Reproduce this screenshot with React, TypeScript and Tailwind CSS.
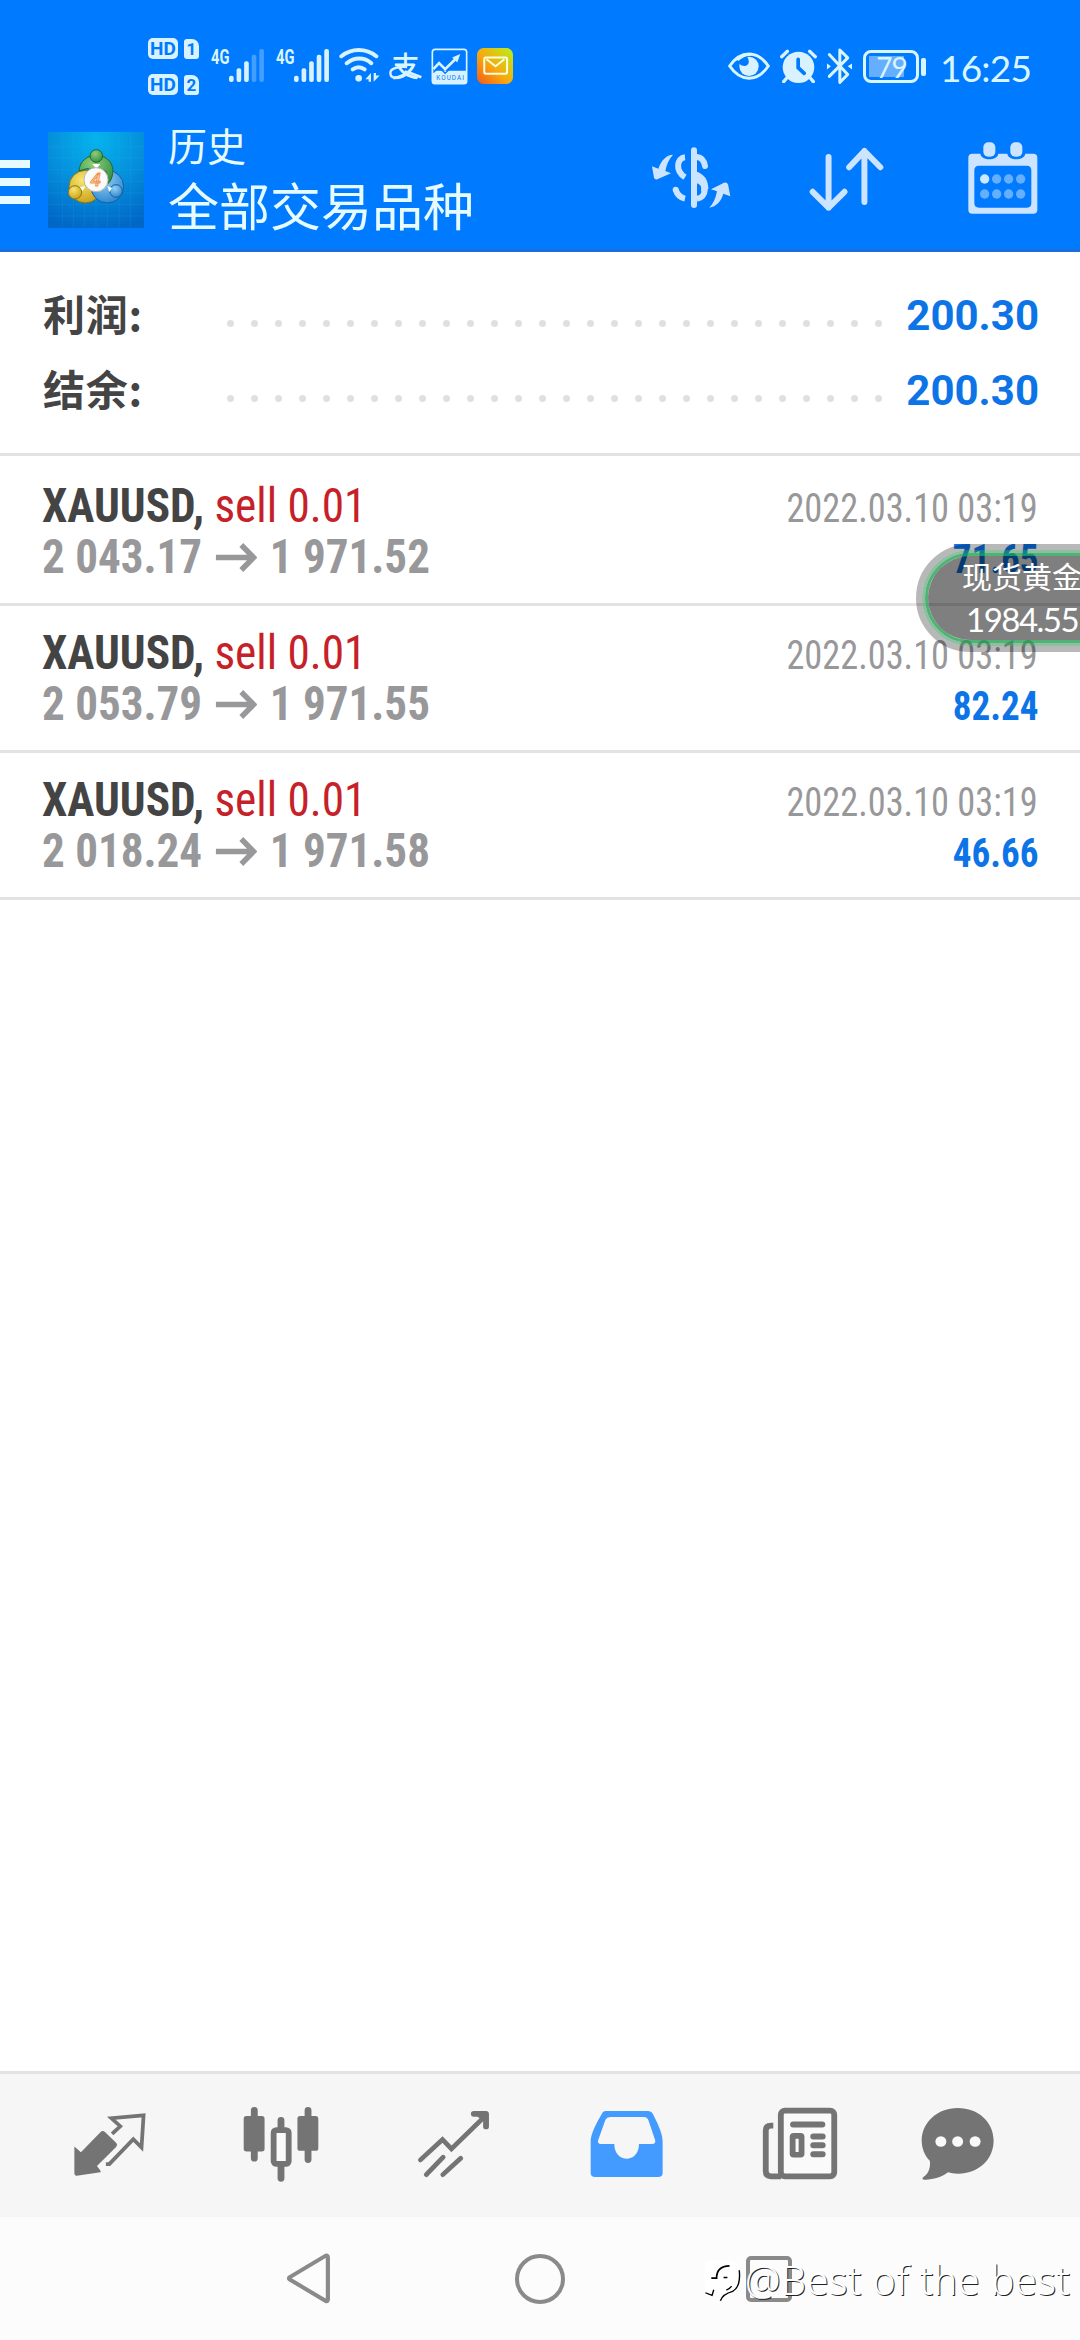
import { type ReactNode } from "react";

interface Deal {
  symbol: string;
  side: string;
  open: string;
  close: string;
  time: string;
  profit: string;
}

interface IconProps {
  box: string;
  className: string;
  children: ReactNode;
}

const summary = [
  { label: "利润:", value: "200.30" },
  { label: "结余:", value: "200.30" }
];

const deals: Deal[] = [
  { symbol: "XAUUSD,", side: "sell 0.01", open: "2 043.17", close: "1 971.52", time: "2022.03.10 03:19", profit: "71.65" },
  { symbol: "XAUUSD,", side: "sell 0.01", open: "2 053.79", close: "1 971.55", time: "2022.03.10 03:19", profit: "82.24" },
  { symbol: "XAUUSD,", side: "sell 0.01", open: "2 018.24", close: "1 971.58", time: "2022.03.10 03:19", profit: "46.66" }
];

const dots = Array.from({ length: 28 }, (_, i) => i);

function Icon({ box, className, children }: IconProps) {
  return (
    <svg viewBox={box} preserveAspectRatio="none" className={`shrink-0 ${className}`} fill="none">
      {children}
    </svg>
  );
}

function SimBadge({ n }: { n: string }) {
  return (
    <div className="flex items-center gap-[6px] text-[#007aff] font-['Roboto'] font-bold">
      <span className="w-[30px] h-[21px] rounded-[5px] bg-[#d9f2ff] text-[19px] leading-[21px] text-center">HD</span>
      <span className="w-[15px] h-[20px] rounded-[3px] rounded-tr-[7px] bg-[#d9f2ff] text-[17px] leading-[21px] text-center">{n}</span>
    </div>
  );
}

function Signal({ level }: { level: number }) {
  const tops = [167, 145, 124, 104, 87];
  return (
    <Icon box="297 87 105 99" className="w-[35px] h-[33px]">
      {tops.map((top, i) => (
        <rect key={top} x={297 + i * 22.7} y={top} width="14" height={186 - top} rx="6" fill="#d9f2ff" opacity={i < level ? 1 : 0.3} />
      ))}
    </Icon>
  );
}

function StatusBar() {
  return (
    <div className="h-[110px] flex items-start text-[#d9f6ff]">
      <div className="ml-[148px] mt-[38px] flex flex-col gap-[15px]">
        <SimBadge n="1" />
        <SimBadge n="2" />
      </div>
      <span className="w-[18px] ml-[12px] mt-[45px] font-['Roboto'] font-bold text-[21px] leading-[24px] whitespace-nowrap origin-left scale-x-[0.7]">4G</span>
      <div className="mt-[49px]"><Signal level={3} /></div>
      <span className="w-[18px] ml-[12px] mt-[45px] font-['Roboto'] font-bold text-[21px] leading-[24px] whitespace-nowrap origin-left scale-x-[0.7]">4G</span>
      <div className="mt-[49px]"><Signal level={5} /></div>
      <Icon box="627 85 123 103" className="w-[41px] h-[34px] ml-[10px] mt-[48px]">
        <g stroke="#d9f2ff" strokeWidth="12" strokeLinecap="round">
          <path d="M634 110C665 85 708 85 739 110" />
          <path d="M650 131C673 112 703 112 724 131" />
          <path d="M668 150C679 142 693 142 704 150" />
        </g>
        <circle cx="686" cy="177" r="10" fill="#d9f2ff" />
        <path d="M706 180L723 161V187H716V180ZM731 161V187L749 168H738V161Z" fill="#d9f2ff" />
      </Icon>
      <div className="relative w-[33px] h-[34px] ml-[9px] mt-[48px]">
        <span className="block text-[28px] leading-[34px] font-medium font-['Noto_Sans_CJK_SC'] text-center">支</span>
        <Icon box="778 140 98 40" className="absolute left-0 top-[18px] w-[33px] h-[14px]">
          <path d="M832 143C810 140 782 146 782 160C782 177 812 181 836 158" stroke="#d9f2ff" strokeWidth="7" />
          <path d="M825 156C845 160 860 166 874 172" stroke="#d9f2ff" strokeWidth="8" />
        </Icon>
      </div>
      <Icon box="903 85 110 110" className="w-[37px] h-[37px] ml-[9px] mt-[48px]">
        <rect x="907" y="89" width="102" height="102" rx="8" stroke="#d9f2ff" strokeWidth="5" />
        <path d="M907 153H1009V185Q1009 191 1003 191H913Q907 191 907 185Z" fill="#d9f2ff" />
        <path d="M910 148L927 130L945 148L982 112" stroke="#d9f2ff" strokeWidth="8" />
        <path d="M910 158L927 142L945 160L960 146" stroke="#007aff" strokeWidth="4" />
        <path d="M966 113L990 103L981 128Z" fill="#d9f2ff" />
        <text x="919" y="180" textLength="82" fill="#007aff" fontSize="19" fontFamily="Roboto">KOUDAI</text>
      </Icon>
      <Icon box="1037 84 109 109" className="w-[36px] h-[36px] ml-[9px] mt-[48px]">
        <defs>
          <linearGradient id="mail" x1="0" y1="1" x2="1" y2="0">
            <stop offset="0" stopColor="#f2591a" />
            <stop offset="0.45" stopColor="#f9a80f" />
            <stop offset="1" stopColor="#b7f01c" />
          </linearGradient>
        </defs>
        <rect x="1037" y="84" width="109" height="109" rx="20" fill="url(#mail)" />
        <rect x="1059" y="113" width="69" height="49" rx="5" stroke="#f6ffe0" strokeWidth="6" />
        <path d="M1066 118L1093 139L1120 118" stroke="#f6ffe0" strokeWidth="6" />
      </Icon>

      <Icon box="80 97 126 84" className="w-[42px] h-[28px] ml-auto mt-[52px]">
        <path d="M85 139C118 91 168 91 201 139C168 188 118 188 85 139Z" stroke="#d9f6ff" strokeWidth="9" />
        <circle cx="143" cy="140" r="29" fill="#d9f2ff" />
        <path d="M110 118L136 108C146 124 144 136 131 139Q122 140 114 132Z" fill="#007aff" />
        <path d="M108 121C120 110 134 104 150 104" stroke="#d9f6ff" strokeWidth="9" />
      </Icon>
      <Icon box="238 88 110 102" className="w-[37px] h-[34px] ml-[10px] mt-[49px]">
        <circle cx="293" cy="143" r="47" fill="#d9f2ff" />
        <path d="M243 111L260 95M343 111L326 95M258 175L249 186M328 175L337 186" stroke="#d9f2ff" strokeWidth="10" strokeLinecap="round" />
        <path d="M292 119V144L310 161" stroke="#007aff" strokeWidth="11" strokeLinecap="round" />
      </Icon>
      <Icon box="376 84 82 112" className="w-[27px] h-[37px] ml-[9px] mt-[48px]">
        <path d="M386 104L442 164L418 188V90L442 114L386 170" stroke="#d9f6ff" strokeWidth="9" strokeLinecap="round" strokeLinejoin="round" />
        <path d="M379 131L391 139L379 149ZM455 131L442 139L455 149Z" fill="#d9f6ff" />
      </Icon>
      <div className="relative w-[56px] h-[33px] ml-[10px] mt-[50px] rounded-[8px] border-[3px] border-[#d9f6ff]">
        <div className="absolute left-[3px] top-[3px] w-[35px] h-[21px] bg-[#66aeff]" />
        <span className="relative block pl-[1px] text-center text-[28px] leading-[28px] font-['Lato'] tracking-[-1px]">79</span>
      </div>
      <div className="w-[5px] h-[18px] ml-[2px] mt-[58px] rounded-[2px] bg-[#d9f6ff]" />
      <span className="w-[90px] ml-[14px] mr-[50px] mt-[46px] text-[37px] leading-[44px] font-['Lato'] tracking-[-0.8px] whitespace-nowrap">16:25</span>
    </div>
  );
}

function AppLogo() {
  return (
    <Icon box="144 66 288 288" className="w-[96px] h-[96px]">
      <defs>
        <radialGradient id="sky" cx="0.5" cy="0.08" r="0.95">
          <stop offset="0" stopColor="#04b4ee" />
          <stop offset="0.5" stopColor="#0590dc" />
          <stop offset="1" stopColor="#0067c6" />
        </radialGradient>
        <radialGradient id="green" cx="0.4" cy="0.3" r="0.8">
          <stop offset="0" stopColor="#8fce7c" />
          <stop offset="1" stopColor="#2b8a3c" />
        </radialGradient>
        <radialGradient id="gold" cx="0.4" cy="0.3" r="0.8">
          <stop offset="0" stopColor="#f6e670" />
          <stop offset="1" stopColor="#c79a10" />
        </radialGradient>
        <radialGradient id="blue" cx="0.4" cy="0.3" r="0.8">
          <stop offset="0" stopColor="#94cff5" />
          <stop offset="1" stopColor="#2380cc" />
        </radialGradient>
      </defs>
      <rect x="144" y="66" width="288" height="288" fill="url(#sky)" />
      <path d="M187 66V354M220 66V354M253 66V354M288 66V354M322 66V354M357 66V354M391 66V354M144 110H432M144 144H432M144 179H432M144 214H432M144 249H432M144 283H432M144 318H432" stroke="#3fb4f0" strokeOpacity="0.22" strokeWidth="2" />
      <g strokeWidth="3">
        <circle cx="256" cy="230" r="49" fill="url(#gold)" stroke="#7d7420" />
        <circle cx="322" cy="230" r="49" fill="url(#blue)" stroke="#15609f" />
        <path d="M237 183C241 120 337 120 339 183C337 205 330 218 322 222L318 184L260 176Z" fill="url(#green)" stroke="#1d6a34" />
        <circle cx="289" cy="138" r="19" fill="url(#green)" stroke="#1d6a34" />
        <circle cx="225" cy="247" r="20" fill="url(#gold)" stroke="#8d7414" />
        <circle cx="348" cy="243" r="19" fill="url(#blue)" stroke="#15609f" />
      </g>
      <path d="M277 162H301L289 177ZM240 232L256 228L248 244ZM322 228L336 234L328 246Z" fill="#fff" />
      <circle cx="288" cy="209" r="36" fill="#fafafa" stroke="#bdb8b0" strokeWidth="3" />
      <text x="287" y="229" textAnchor="middle" fill="#fbe3c8" stroke="#f0964f" strokeWidth="3" fontSize="56" fontWeight="500" fontStyle="italic" fontFamily="Roboto">4</text>
    </Icon>
  );
}

function Header() {
  return (
    <header className="h-[252px] bg-[#007aff] border-b-[3px] border-[#1a6ddb]">
      <StatusBar />
      <div className="flex items-start text-[#e6fbff]">
        <div className="mt-[50px] w-[30px] flex flex-col gap-[10px]">
          <span className="h-[8px] bg-[#e6fbff]" />
          <span className="h-[8px] bg-[#e6fbff]" />
          <span className="h-[8px] bg-[#e6fbff]" />
        </div>
        <div className="ml-[18px] mt-[22px]"><AppLogo /></div>
        <div className="ml-[24px] mt-[7px] font-['Noto_Sans_CJK_SC']">
          <div className="text-[39px] leading-[54px]">历史</div>
          <div className="text-[51px] leading-[66px]">全部交易品种</div>
        </div>
        <Icon box="90 112 240 186" className="w-[80px] h-[62px] ml-auto mt-[37px]">
          <rect x="210" y="113" width="18" height="182" rx="9" fill="#cce4ff" />
          <g stroke="#cce4ff" strokeWidth="18">
            <path d="M192 143C168 145 161 183 192 203" />
            <path d="M228 142C241 143 249 152 252 169" strokeLinecap="round" />
            <path d="M228 211C260 219 258 264 228 267" />
            <path d="M164 240C169 257 178 264 192 267" strokeLinecap="butt" />
          </g>
          <circle cx="164" cy="240" r="9" fill="#cce4ff" />
          <path d="M228 186C248 194 262 207 262 238L240 246C243 225 238 216 228 214Z" fill="#cce4ff" />
          <path d="M156 135C136 136 121 151 112 177L93 170L99 204Q101 211 109 209L150 191L133 184C137 163 144 148 156 135Z" fill="#cce4ff" />
          <path d="M265 294C286 290 300 276 307 252L328 260L321 224Q318 217 309 219L270 239L288 245C284 266 277 281 265 294Z" fill="#cce4ff" />
        </Icon>
        <Icon box="565 110 226 196" className="w-[75px] h-[65px] ml-[78px] mt-[37px]">
          <g stroke="#cce4ff" strokeWidth="18" strokeLinecap="round" strokeLinejoin="round">
            <path d="M624 140V293M576 245L624 293L672 245" />
            <path d="M732 276V122M686 171L732 122L780 171" />
          </g>
        </Icon>
        <Icon box="1043 97 210 216" className="w-[70px] h-[72px] ml-[84px] mr-[42px] mt-[32px]">
          <path fillRule="evenodd" fill="#cce4ff" d="M1056 132H1080C1083 154 1131 154 1134 132H1161C1164 154 1212 154 1215 132H1239Q1251 132 1251 144V300Q1251 312 1239 312H1056Q1044 312 1044 300V144Q1044 132 1056 132ZM1076 168Q1062 168 1062 182V280Q1062 294 1076 294H1220Q1233 294 1233 280V182Q1233 168 1220 168Z" />
          <rect x="1089" y="98" width="36" height="43" rx="15" fill="#cce4ff" />
          <rect x="1170" y="98" width="36" height="43" rx="15" fill="#cce4ff" />
          {[208, 253].map((y) =>
            [1093, 1129, 1165, 1201].map((x) => (
              <circle key={`${x}-${y}`} cx={x} cy={y} r="14" fill={x === 1093 && y === 208 ? "#cce9ff" : "#66afff"} />
            ))
          )}
        </Icon>
      </div>
    </header>
  );
}

function Summary() {
  return (
    <section className="h-[204px] pt-[22px] border-b-[3px] border-[#e3e3e3]">
      {summary.map((row) => (
        <div key={row.label} className="h-[75px] pl-[42px] pr-[42px] flex items-baseline leading-[75px] text-[42px] font-bold">
          <span className="w-[185px] translate-x-[1px] translate-y-[1px] tracking-[0.8px] text-[#444] font-['Noto_Sans_CJK_SC']">{row.label}</span>
          <span className="flex gap-[17px] -translate-y-[3px]">
            {dots.map((i) => (
              <span key={i} className="size-[7px] rounded-full bg-[#e0e0e0]" />
            ))}
          </span>
          <span className="ml-auto translate-x-[1px] text-[#0d74e7] font-['Roboto']">{row.value}</span>
        </div>
      ))}
    </section>
  );
}

function DealRow({ deal }: { deal: Deal }) {
  return (
    <div className="h-[147px] pt-[21px] px-[42px] border-b-[3px] border-[#e3e3e3] font-['Roboto'] font-stretch-condensed text-[48px] leading-[51px]">
      <div className="h-[51px] flex items-baseline justify-between">
        <div className="origin-left scale-x-[0.943]">
          <span className="font-bold text-[#444]">{deal.symbol}</span>{" "}
          <span className="text-[#c62128]">{deal.side}</span>
        </div>
        <span className="origin-right scale-x-[0.908] text-[40px] text-[#98989a]">{deal.time}</span>
      </div>
      <div className="h-[51px] flex items-baseline justify-between font-bold">
        <div className="flex items-baseline origin-left scale-x-[0.939] text-[#98989a]">
          <span>{deal.open}</span>
          <Icon box="0 0 42 29" className="w-[44px] h-[29px] mx-[14px] translate-y-[-1px]">
            <path d="M0 14.500H38M26 2L38.500 14.500L26 27" stroke="#98989a" strokeWidth="5.500" />
          </Icon>
          <span>{deal.close}</span>
        </div>
        <span className="origin-right scale-x-[0.928] text-[40px] text-[#0d74e7]">{deal.profit}</span>
      </div>
    </div>
  );
}

// Floating quote widget docked to the right edge
function QuoteBubble() {
  return (
    <div className="absolute left-[916px] top-[544px] w-[240px] h-[108px] rounded-full border-[6px] border-black/28">
      <div className="h-full rounded-full border-[3px] border-[#1f8047]/50">
        <div className="h-full rounded-full border-[3px] border-[#159a45]/75">
          <div className="h-full rounded-full bg-black/50 text-white pl-[34px] whitespace-nowrap">
            <div className="pt-[1px] text-[30px] leading-[36px] font-['Noto_Sans_CJK_SC']">现货黄金</div>
            <div className="pl-[4px] pt-[6px] text-[33px] leading-[40px] font-['Lato'] tracking-[-1.500px]">1984.55</div>
          </div>
        </div>
      </div>
    </div>
  );
}

function TabBar() {
  return (
    <nav className="h-[146px] bg-[#f6f6f6] border-t-[3px] border-[#e3e3e3] flex items-start">
      <Icon box="212 155 216 196" className="w-[74px] h-[65px] ml-[73px] mt-[38px]">
        <path d="M216 259L235 276L292 216Q299 209 306 216L337 247Q344 254 337 261L282 318L293 333L292 337L223 347Q216 348 216 340Z" fill="#747474" />
        <path d="M326 221L350 198L324 174L418 165L412 262L388 237L318 312H308" stroke="#747474" strokeWidth="11" />
      </Icon>
      <Icon box="706 140 222 224" className="w-[76px] h-[75px] ml-[96px] mt-[33px]">
        <path d="M739 150V293M896 150V297M817 180V210M817 310V353" stroke="#747474" strokeWidth="20" strokeLinecap="round" />
        <rect x="708" y="167" width="61" height="106" rx="8" fill="#747474" />
        <rect x="865" y="167" width="61" height="104" rx="8" fill="#747474" />
        <rect x="795.500" y="209" width="44" height="101" rx="8" stroke="#747474" strokeWidth="17" fill="#fafafa" />
      </Icon>
      <Icon box="1211 147 212 203" className="w-[73px] h-[68px] ml-[98px] mt-[36px]">
        <g stroke="#747474" strokeWidth="14" strokeLinecap="round">
          <path d="M1221 296L1285 235L1311 263L1408 166" />
          <path d="M1238 340L1287 288M1286 340L1338 291" />
        </g>
        <path d="M1376 150H1411Q1420 150 1420 159V196A8.500 8.500 0 0 1 1403 196V180L1387 167H1376A8.500 8.500 0 0 1 1376 150Z" fill="#747474" />
      </Icon>
      <Icon box="144 147 216 204" className="w-[74px] h-[68px] ml-[100px] mt-[36px]">
        <path fillRule="evenodd" fill="#439bff" d="M190 150H312Q323 150 328 160Q356 215 356 240V335Q356 348 343 348H159Q146 348 146 335V240Q146 215 178 160Q182 150 190 150ZM203 168Q193 168 189 176L168 237Q165 249 176 249H215C215 308 287 308 287 249H325Q337 249 334 237L315 179Q311 168 302 168Z" />
      </Icon>
      <Icon box="644 139 222 220" className="w-[76px] h-[73px] ml-[98px] mt-[33px]">
        <rect x="699" y="150" width="156" height="198" rx="12" stroke="#747474" strokeWidth="17" fill="#fafafa" />
        <path d="M677 195H670Q655 195 655 210V333Q655 348 670 348H700" stroke="#747474" strokeWidth="17" />
        <path d="M735 191.500H820M794 228H821M794 254.500H821M794 281.500H821" stroke="#747474" strokeWidth="18" strokeLinecap="round" />
        <rect x="733.500" y="226" width="26" height="57" rx="3" stroke="#747474" strokeWidth="17" />
      </Icon>
      <Icon box="1106 138 216 220" className="w-[74px] h-[73px] ml-[83px] mt-[33px]">
        <path d="M1213 141C1274 141 1318 184 1318 239C1318 299 1270 340 1213 339Q1197 339 1185 335C1165 350 1140 358 1115 357Q1106 355 1114 348C1128 340 1134 320 1132 301C1116 283 1108 262 1108 239C1108 184 1155 141 1213 141Z" fill="#747474" />
        <circle cx="1164" cy="242" r="16" fill="#fafafa" />
        <circle cx="1213" cy="242" r="16" fill="#fafafa" />
        <circle cx="1264" cy="242" r="16" fill="#fafafa" />
      </Icon>
    </nav>
  );
}

function SystemBar() {
  return (
    <div className="relative h-[123px] bg-[#fcfcfc] flex items-start">
      <Icon box="831 580 130 154" className="w-[45px] h-[51px] ml-[286px] mt-[36px]">
        <path d="M946 588Q952 586 952 594V720Q952 727 946 725L842 660Q837 657 842 653Z" stroke="#8a8a8a" strokeWidth="12" strokeLinejoin="round" />
      </Icon>
      <div className="size-[50px] ml-[184px] mt-[37px] rounded-full border-[4px] border-[#8a8a8a]" />
      <div className="size-[46px] ml-[181px] mt-[39px] rounded-[5px] border-[4px] border-[#8a8a8a]" />
      <div className="absolute left-[704px] top-[42px] flex items-start text-white">
        <Icon box="476 606 106 130" className="w-[37px] h-[43px]">
          <path d="M482 614Q530 600 572 618Q588 660 572 700L540 722L484 708Q470 660 482 614Z" fill="#fff" />
          <path d="M497 664H512Q512 628 549 627" stroke="#000" strokeWidth="5" />
          <path d="M532 662H543M577 640Q582 690 558 704Q530 712 523 732M540 700Q550 696 555 688M480 708L499 716L504 699" stroke="#000" strokeWidth="4" />
        </Icon>
        <span className="ml-[4px] mt-[-6px] text-[40px] leading-[54px] tracking-[0.28px] font-['Noto_Sans'] font-light whitespace-nowrap [text-shadow:1px_1px_0_#222]">@Best of the best</span>
      </div>
    </div>
  );
}

export default function App() {
  return (
    <div className="relative w-[1080px] h-[2340px] overflow-hidden bg-white flex flex-col">
      <Header />
      <Summary />
      <main className="flex-1 pt-[3px]">
        {deals.map((deal) => (
          <DealRow key={deal.open} deal={deal} />
        ))}
      </main>
      <TabBar />
      <SystemBar />
      <QuoteBubble />
    </div>
  );
}
